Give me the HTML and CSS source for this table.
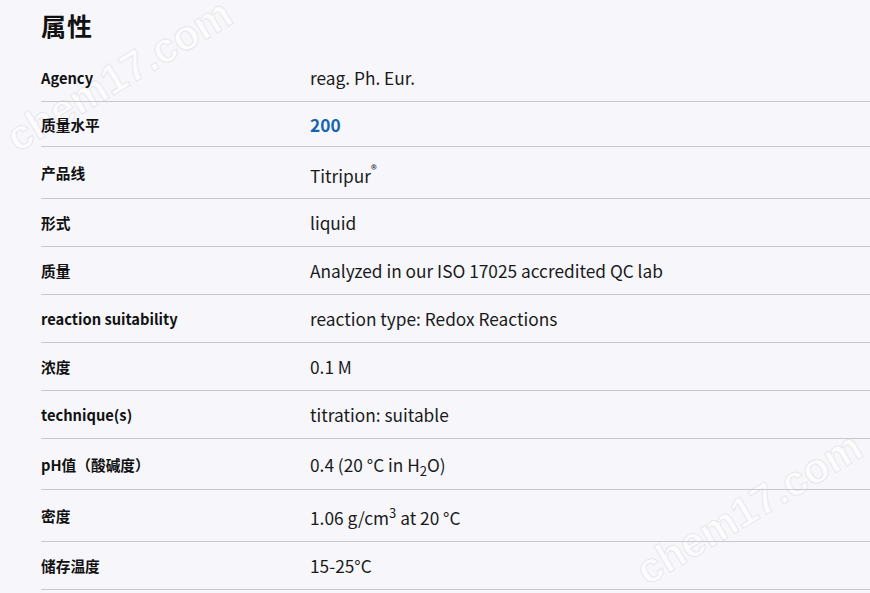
FILE: index.html
```html
<!DOCTYPE html>
<html lang="zh">
<head>
<meta charset="utf-8">
<title>属性</title>
<link rel="stylesheet" href="styles.css">
</head>
<body>
<div class="page">
  <div class="wm wm--a">chem17.com</div>
  <div class="wm wm--b">chem17.com</div>
  <h2 class="title">属性</h2>
  <div class="props">
    <div class="row"><div class="label">Agency</div><div class="value">reag. Ph. Eur.</div></div>
    <div class="row row--short"><div class="label">质量水平</div><div class="value"><a class="link">200</a></div></div>
    <div class="row row--tall"><div class="label">产品线</div><div class="value">Titripur<sup class="reg">®</sup></div></div>
    <div class="row"><div class="label">形式</div><div class="value">liquid</div></div>
    <div class="row"><div class="label">质量</div><div class="value">Analyzed in our ISO 17025 accredited QC lab</div></div>
    <div class="row"><div class="label">reaction suitability</div><div class="value">reaction type: Redox Reactions</div></div>
    <div class="row"><div class="label">浓度</div><div class="value">0.1 M</div></div>
    <div class="row"><div class="label">technique(s)</div><div class="value">titration: suitable</div></div>
    <div class="row row--sub"><div class="label">pH值（酸碱度）</div><div class="value">0.4 (20 °C in H<sub>2</sub>O)</div></div>
    <div class="row row--sup"><div class="label">密度</div><div class="value">1.06 g/cm<sup>3</sup> at 20 °C</div></div>
    <div class="row"><div class="label">储存温度</div><div class="value">15-25°C</div></div>
  </div>
</div>
</body>
</html>
```
FILE: styles.css
```css
html, body {
  margin: 0;
  padding: 0;
  background: #f7f7fb;
}
body {
  font-family: "Noto Sans CJK SC", "Noto Sans", sans-serif;
  color: #111;
  overflow: hidden;
}
.page {
  position: relative;
  padding-left: 41px;
  height: 593px;
  overflow: hidden;
}
.title {
  position: relative;
  margin: 0;
  height: 54px;
  line-height: 50px;
  font-size: 25px;
  font-weight: 700;
  letter-spacing: 1px;
  color: #111;
}
.props {
  position: relative;
  display: flex;
  flex-direction: column;
}
.row {
  display: flex;
  align-items: center;
  height: 47px;
  border-bottom: 1px solid #c9c9cd;
}
.row--short { height: 44px; }
.row--tall { height: 51px; }
.row--sub { height: 50px; }
.row--sup { height: 51px; }
.label {
  width: 269px;
  flex: none;
  font-size: 14.7px;
  font-weight: 700;
  color: #111;
}
.value {
  font-size: 17.3px;
  color: #1a1a1a;
}
.link {
  color: #1565ad;
  font-weight: 700;
}
sup, sub {
  font-size: 13px;
  line-height: 0;
}
.reg {
  font-size: 12px;
  vertical-align: 9px;
}
.row--tall .value { padding-top: 6px; }
.row--sup .value { padding-top: 4px; }
.row--sub .value { padding-top: 1px; }
.wm {
  position: absolute;
  font-family: "Liberation Sans", sans-serif;
  font-size: 42px;
  line-height: 42px;
  font-weight: 700;
  color: rgba(255,255,255,0.7);
  -webkit-text-stroke: 1px #e8e8ee;
  transform: rotate(-31deg);
  transform-origin: left center;
  white-space: nowrap;
  pointer-events: none;
}
.wm--a { left: 10px; top: 120px; }
.wm--b { left: 640px; top: 553px; }
```
